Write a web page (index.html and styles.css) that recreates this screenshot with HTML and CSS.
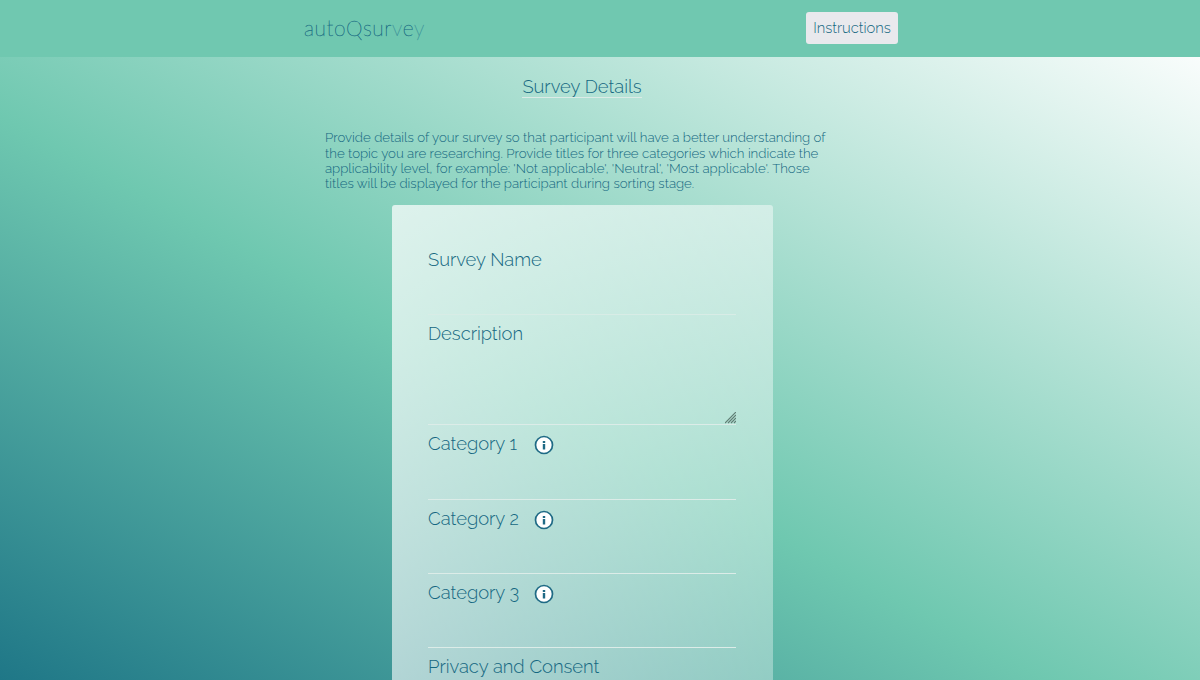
FILE: index.html
```html
<!DOCTYPE html>
<html lang="en">
<head>
<meta charset="utf-8">
<title>autoQsurvey</title>
<link rel="stylesheet" href="styles.css">
</head>
<body>
<header class="topbar">
  <div class="logo">autoQsur<span class="fade">v</span>e<span class="fade">y</span></div>
  <button class="instructions">Instructions</button>
</header>
<main class="content">
  <h1 class="title">Survey Details</h1>
  <p class="intro">
    <span class="line">Provide details of your survey so that participant will have a better understanding of</span>
    <span class="line">the topic you are researching. Provide titles for three categories which indicate the</span>
    <span class="line">applicability level, for example: 'Not applicable', 'Neutral', 'Most applicable'. Those</span>
    <span class="line">titles will be displayed for the participant during sorting stage.</span>
  </p>
  <form class="card">
    <div class="field faint"><label>Survey Name</label></div>
    <div class="field tall"><label>Description</label>
      <svg class="grip" width="11" height="12" viewBox="0 0 11 12"><path d="M0 11L11 0M3 11L11 3M6 11L11 6M9 11L11 9"/></svg>
    </div>
    <div class="field first"><label class="cat">Category 1</label><span class="info"><svg width="20" height="20" viewBox="0 0 20 20"><circle cx="10" cy="10" r="8.5"/><path d="M8.8 6h2.4v2H8.8zM8.8 9h2.4v5.5H8.8z"/></svg></span></div>
    <div class="field second"><label class="cat">Category 2</label><span class="info"><svg width="20" height="20" viewBox="0 0 20 20"><circle cx="10" cy="10" r="8.5"/><path d="M8.8 6h2.4v2H8.8zM8.8 9h2.4v5.5H8.8z"/></svg></span></div>
    <div class="field"><label class="cat">Category 3</label><span class="info"><svg width="20" height="20" viewBox="0 0 20 20"><circle cx="10" cy="10" r="8.5"/><path d="M8.8 6h2.4v2H8.8zM8.8 9h2.4v5.5H8.8z"/></svg></span></div>
    <div class="field last"><label>Privacy and Consent</label></div>
  </form>
</main>
</body>
</html>
```
FILE: styles.css
```css
* { box-sizing: border-box; }
body {
  margin: 0;
  height: 680px;
  overflow: hidden;
  display: flex;
  flex-direction: column;
  color: #146781;
  font-family: Raleway, "Lato Light", Lato, sans-serif;
  font-weight: 300;
  background: linear-gradient(28.3deg, #1f7787, #6fc8b0 42.5%, #fff 98%);
}
.topbar {
  flex: none;
  height: 57px;
  padding: 12px 302px 0 304px;
  display: flex;
  justify-content: space-between;
  align-items: flex-start;
  background: #70c8b0;
}
.logo {
  margin-top: 3px;
  font-family: Lato, sans-serif;
  font-weight: 100;
  font-size: 21px;
  line-height: 26px;
  letter-spacing: 0.6px;
  color: #146781;
  -webkit-text-stroke: 0.3px currentColor;
}
.fade { color: #3f949a; }
.instructions {
  width: 92px;
  height: 32px;
  padding: 0 0 2px;
  border: 0;
  border-radius: 3px;
  background: #e9e9ed;
  color: #146781;
  font: inherit;
  font-size: 14.75px;
}
.content {
  flex: 1;
  min-height: 0;
  width: 514px;
  margin-left: 325px;
  display: flex;
  flex-direction: column;
  align-items: center;
}
.title {
  margin: 19px 0 0;
  height: 22px;
  font-size: 18.4px;
  font-weight: 300;
  line-height: 21px;
  border-bottom: 1px solid #dcebe6;
}
.intro {
  width: 100%;
  margin: 32.1px 0 0;
  font-size: 13.27px;
  line-height: 15.4px;
}
.line { display: block; white-space: nowrap; }
.card {
  flex: 1;
  min-height: 0;
  width: 381px;
  margin-top: 13.3px;
  padding: 36px 36.5px 0;
  border-radius: 3px 3px 0 0;
  background: linear-gradient(110deg, rgba(255,255,255,.72), rgba(255,255,255,.34));
}
.field {
  height: 74px;
  padding-top: 7px;
  display: flex;
  align-items: flex-start;
  border-bottom: 1px solid #dcece8;
  font-size: 18.4px;
  line-height: 24px;
}
.faint { border-color: #d8ece6; }
.tall { height: 110px; justify-content: space-between; }
.first { height: 75px; }
.second { padding-top: 6.6px; }
.last { height: 32px; border: 0; }
.grip { align-self: flex-end; fill: none; stroke: #5f7d74; stroke-width: 1.2; }
.cat { width: 106px; }
.info { height: 20px; margin-top: 3.3px; display: flex; }
.info circle { fill: #fff; stroke: #1f6a85; stroke-width: 1.7; }
.info path { fill: #1f6a85; }
```
